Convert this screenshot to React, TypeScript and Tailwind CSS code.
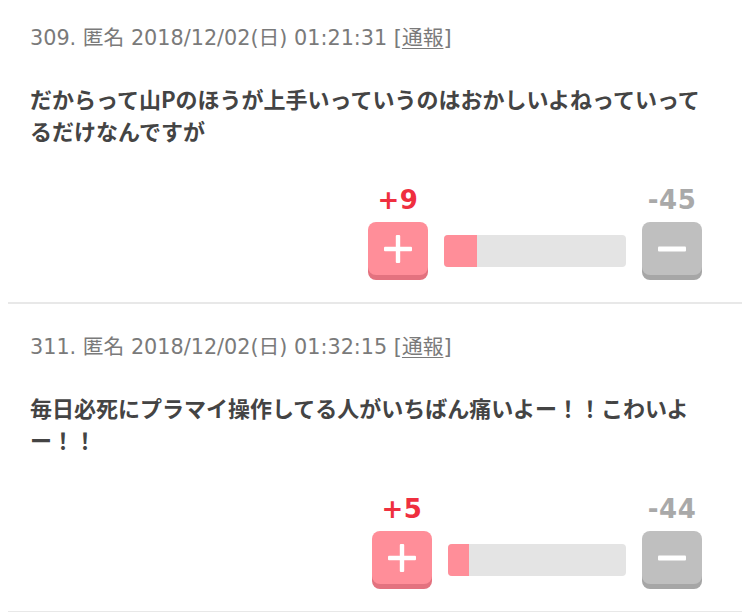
import React from "react";

type Item = {
  no: string;
  date: string;
  body: string;
  plus: string;
  minus: string;
  barW: number;
  fillW: number;
  pt: string;
};

const items: Item[] = [
  {
    no: "309.",
    date: "2018/12/02(日) 01:21:31",
    body: "だからって山Pのほうが上手いっていうのはおかしいよねっていってるだけなんですが",
    plus: "+9",
    minus: "-45",
    barW: 182,
    fillW: 33,
    pt: "pt-[24px]",
  },
  {
    no: "311.",
    date: "2018/12/02(日) 01:32:15",
    body: "毎日必死にプラマイ操作してる人がいちばん痛いよー！！こわいよー！！",
    plus: "+5",
    minus: "-44",
    barW: 178,
    fillW: 21,
    pt: "pt-[29px]",
  },
];

function PlusIcon() {
  return (
    <svg width="30" height="30" viewBox="0 0 30 30">
      <rect x="12.8" y="1" width="4.4" height="28" rx="1" fill="#fff" />
      <rect x="1" y="12.8" width="28" height="4.4" rx="1" fill="#fff" />
    </svg>
  );
}

function MinusIcon() {
  return (
    <svg width="30" height="30" viewBox="0 0 30 30">
      <rect x="1" y="12.6" width="28" height="4.8" rx="1" fill="#fff" />
    </svg>
  );
}

function Comment({ it }: { it: Item }) {
  return (
    <div>
      <div className={`${it.pt} px-[30px]`}>
        <div
          className="text-[20.75px] leading-[28px] text-[#7a7a7a] whitespace-nowrap"
          style={{ fontFamily: '"DejaVu Sans", "Noto Sans CJK JP", sans-serif' }}
        >
          {it.no} 匿名 {it.date} [<span className="underline underline-offset-[3px] decoration-1">通報</span>]
        </div>
        <div
          className="mt-[30px] text-[22px] leading-[32px] font-bold text-[#444444]"
          style={{ fontFamily: '"Noto Sans CJK JP", sans-serif' }}
        >
          {it.body}
        </div>
        <div className="mt-[39px] flex justify-end pr-[18px]">
          <div className="flex items-start gap-[16px]">
            <div className="flex flex-col items-center w-[60px]">
              <div
                className="h-[30px] leading-[30px] text-[26px] tracking-[0.5px] font-bold text-[#ef2f3f]"
                style={{ fontFamily: '"DejaVu Sans", sans-serif' }}
              >
                {it.plus}
              </div>
              <div className="mt-[7px] w-[60px] h-[53px] rounded-[8px] bg-[#ff8e99] shadow-[0_5px_0_#e3727f] flex items-center justify-center">
                <PlusIcon />
              </div>
            </div>
            <div
              className="mt-[50px] h-[32px] rounded-[4px] bg-[#e4e4e4] overflow-hidden"
              style={{ width: it.barW }}
            >
              <div className="h-full bg-[#ff8e99]" style={{ width: it.fillW }} />
            </div>
            <div className="flex flex-col items-center w-[60px]">
              <div
                className="h-[30px] leading-[30px] text-[26px] tracking-[0.5px] font-bold text-[#a9a9a9]"
                style={{ fontFamily: '"DejaVu Sans", sans-serif' }}
              >
                {it.minus}
              </div>
              <div className="mt-[7px] w-[60px] h-[53px] rounded-[8px] bg-[#bfbfbf] shadow-[0_5px_0_#a6a6a6] flex items-center justify-center">
                <MinusIcon />
              </div>
            </div>
          </div>
        </div>
      </div>
      <div className="mt-[27px] mx-[8px] h-[2px] bg-[#e8e8e8]" />
    </div>
  );
}

export default function App() {
  return (
    <div className="w-[750px] h-[612px] bg-white overflow-hidden">
      {items.map((it) => (
        <Comment key={it.no} it={it} />
      ))}
    </div>
  );
}
